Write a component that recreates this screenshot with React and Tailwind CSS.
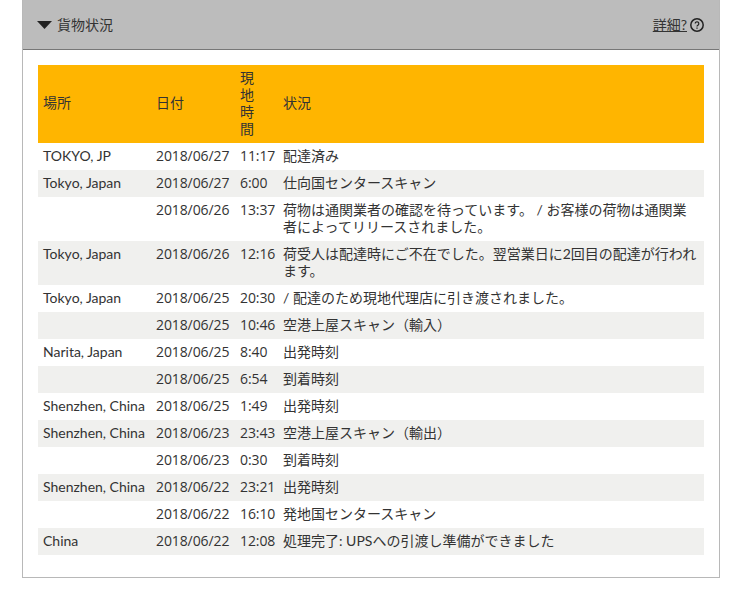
const rows = [
  ["TOKYO, JP", "2018/06/27", "11:17", "配達済み"],
  ["Tokyo, Japan", "2018/06/27", "6:00", "仕向国センタースキャン"],
  ["", "2018/06/26", "13:37", "荷物は通関業者の確認を待っています。 / お客様の荷物は通関業者によってリリースされました。"],
  ["Tokyo, Japan", "2018/06/26", "12:16", "荷受人は配達時にご不在でした。翌営業日に2回目の配達が行われます。"],
  ["Tokyo, Japan", "2018/06/25", "20:30", "/ 配達のため現地代理店に引き渡されました。"],
  ["", "2018/06/25", "10:46", "空港上屋スキャン（輸入）"],
  ["Narita, Japan", "2018/06/25", "8:40", "出発時刻"],
  ["", "2018/06/25", "6:54", "到着時刻"],
  ["Shenzhen, China", "2018/06/25", "1:49", "出発時刻"],
  ["Shenzhen, China", "2018/06/23", "23:43", "空港上屋スキャン（輸出）"],
  ["", "2018/06/23", "0:30", "到着時刻"],
  ["Shenzhen, China", "2018/06/22", "23:21", "出発時刻"],
  ["", "2018/06/22", "16:10", "発地国センタースキャン"],
  ["China", "2018/06/22", "12:08", "処理完了: UPSへの引渡し準備ができました"],
];

export default function App() {
  return (
    <div className="w-[740px] h-[591px] bg-white overflow-hidden font-['Lato','Noto_Sans_CJK_JP',sans-serif] text-[14px] leading-[17px] text-[#333]">
      <div className="ml-[22px] w-[698px] h-[578px] border border-t-0 border-[#b8b8b8]">
        <div className="h-[50px] bg-[#bcbcbc] border-b border-[#777] flex items-center justify-between pl-[14px] pr-[15px]">
          <div className="flex items-center gap-[5px]">
            <svg width="15" height="8" viewBox="0 0 15 8"><path d="M0 0h15L7.5 8z" fill="#222" /></svg>
            <span>貨物状況</span>
          </div>
          <div className="flex items-center gap-[3px]">
            <span className="underline">詳細?</span>
            <svg width="14" height="14" viewBox="0 0 14 14" fill="none" stroke="#222">
              <circle cx="7" cy="7" r="6.2" strokeWidth="1.5" />
              <path d="M5.2 5.6a1.8 1.8 0 1 1 2.7 1.6c-.6.4-.9.7-.9 1.2" strokeWidth="1.2" />
              <path d="M7 9.6v1.2" strokeWidth="1.3" />
            </svg>
          </div>
        </div>
        <div className="pt-[15px] px-[15px]">
          <table className="w-[666px] border-collapse table-fixed">
            <colgroup>
              <col className="w-[113px]" />
              <col className="w-[84px]" />
              <col className="w-[44px]" />
              <col />
            </colgroup>
            <thead>
              <tr className="bg-[#ffb500]">
                <th className="font-normal text-left pt-[4px] pb-[8px] px-[5px] align-middle">場所</th>
                <th className="font-normal text-left pt-[4px] pb-[8px] px-[5px] align-middle">日付</th>
                <th className="font-normal text-left pt-[4px] pb-[6px] px-[5px] align-middle"><div className="w-[14px]">現地時間</div></th>
                <th className="font-normal text-left pt-[4px] pb-[8px] pl-[4px] pr-[5px] align-middle">状況</th>
              </tr>
            </thead>
            <tbody>
              {rows.map((r, i) => (
                <tr key={i} className={i % 2 === 1 ? "bg-[#f0f0ee]" : "bg-white"}>
                  <td className="pt-[4px] pb-[6px] px-[5px] align-top whitespace-nowrap">{r[0]}</td>
                  <td className="pt-[4px] pb-[6px] px-[5px] align-top whitespace-nowrap font-['Open_Sans','Noto_Sans_CJK_JP',sans-serif] tracking-[-0.1px]">{r[1]}</td>
                  <td className="pt-[4px] pb-[6px] px-[5px] align-top whitespace-nowrap font-['Open_Sans','Noto_Sans_CJK_JP',sans-serif] tracking-[-0.1px]">{r[2]}</td>
                  <td className="pt-[4px] pb-[6px] pl-[4px] pr-[5px] align-top">{r[3]}</td>
                </tr>
              ))}
            </tbody>
          </table>
        </div>
      </div>
    </div>
  );
}
